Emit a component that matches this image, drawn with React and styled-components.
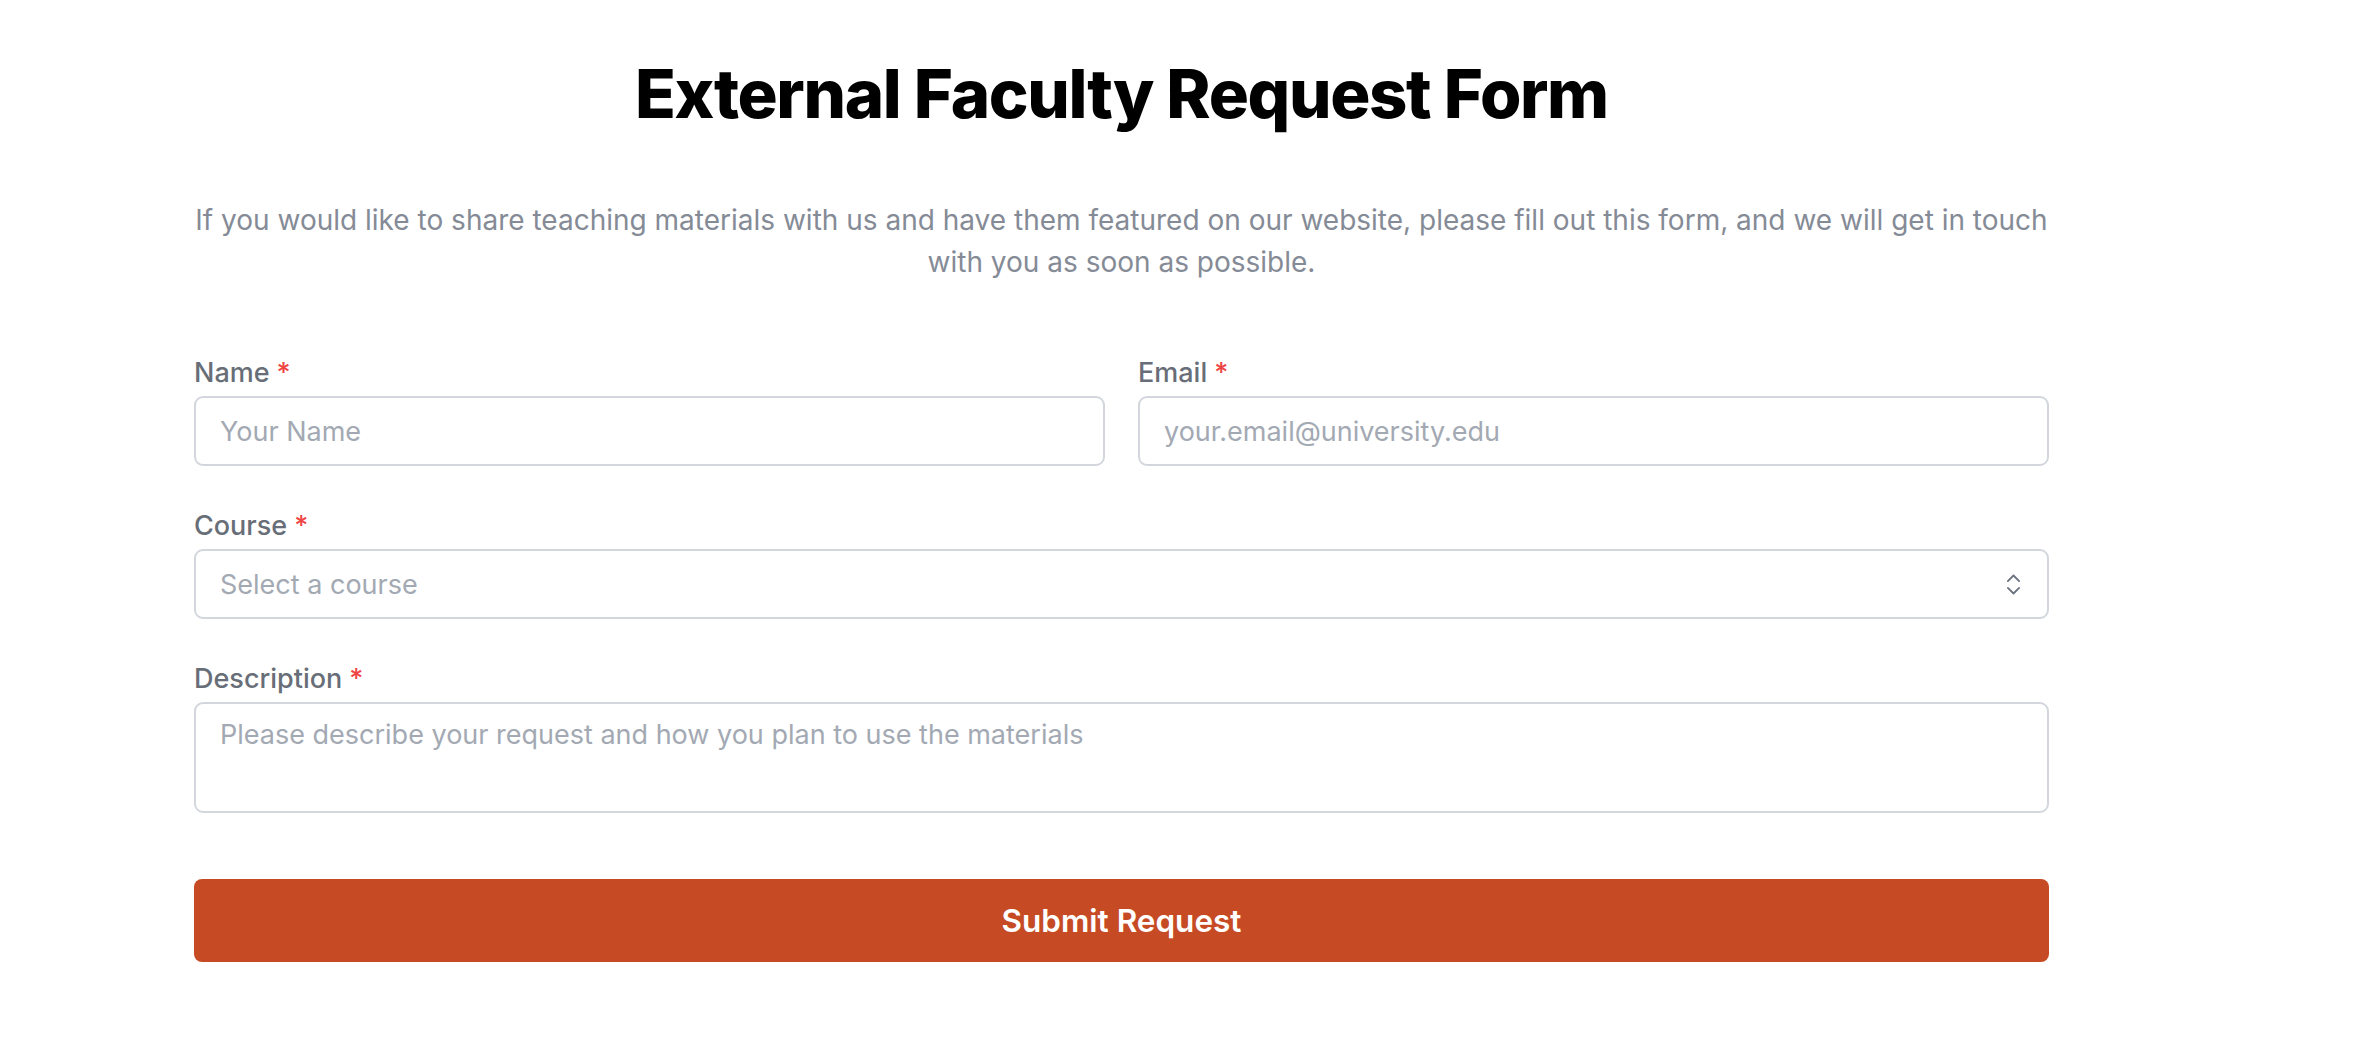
import React from "react";
import styled, { createGlobalStyle } from "styled-components";
import { ChevronsUpDown } from "lucide-react";

const GlobalStyle = createGlobalStyle`
  html, body {
    margin: 0;
    padding: 0;
    background: #ffffff;
  }
  body {
    font-family: Inter, "Noto Sans", "Liberation Sans", sans-serif;
    -webkit-font-smoothing: antialiased;
  }
  * { box-sizing: border-box; }
`;

const Page = styled.main`
  width: 1855px;
  margin-left: 194px;
  padding-top: 54px;
  padding-bottom: 80px;
`;

const Title = styled.h1`
  margin: 0;
  text-align: center;
  font-size: 67px;
  line-height: 80px;
  font-weight: 800;
  letter-spacing: -0.02em;
  color: #000000;
`;

const Intro = styled.p`
  margin: 65px -14px 70px;
  text-align: center;
  font-size: 28px;
  line-height: 42px;
  color: #858b96;
`;

const Form = styled.form`
  display: grid;
  grid-template-columns: 1fr 1fr;
  column-gap: 33px;
  row-gap: 40px;
`;

const Field = styled.div`
  display: flex;
  flex-direction: column;
  grid-column: ${(p) => (p.$wide ? "1 / -1" : "auto")};
`;

const Label = styled.label`
  font-size: 27px;
  line-height: 39px;
  font-weight: 500;
  color: #686e78;
  margin-bottom: 4px;
`;

const Required = styled.span`
  color: #ef4444;
  margin-left: 7px;
`;

const controlBase = `
  width: 100%;
  border: 2px solid #d3d7dd;
  border-radius: 9px;
  background: #ffffff;
  font-family: Inter, "Noto Sans", "Liberation Sans", sans-serif;
  font-size: 27px;
  color: #111827;
  outline: none;
  &::placeholder { color: #a3a9b3; }
`;

const Input = styled.input`
  ${controlBase}
  height: 70px;
  padding: 0 24px;
`;

const SelectBox = styled.div`
  ${controlBase}
  height: 70px;
  padding: 0 20px 0 24px;
  display: flex;
  align-items: center;
  justify-content: space-between;
  color: #a3a9b3;
  cursor: pointer;
`;

const SelectIcon = styled(ChevronsUpDown)`
  color: #6b7280;
  flex-shrink: 0;
`;

const TextArea = styled.textarea`
  ${controlBase}
  height: 111px;
  padding: 11px 24px;
  line-height: 39px;
  resize: none;
`;

const SubmitButton = styled.button`
  grid-column: 1 / -1;
  margin-top: 26px;
  height: 83px;
  border: none;
  border-radius: 8px;
  background: #c64b24;
  color: #ffffff;
  font-family: Inter, "Noto Sans", "Liberation Sans", sans-serif;
  font-size: 31.5px;
  font-weight: 600;
  cursor: pointer;
`;

export default function App() {
  return (
    <>
      <GlobalStyle />
      <Page>
        <Title>External Faculty Request Form</Title>
        <Intro>
          If you would like to share teaching materials with us and have them featured on our website, please fill out this form, and we will get in touch with you as soon as possible.
        </Intro>
        <Form onSubmit={(e) => e.preventDefault()}>
          <Field>
            <Label>
              Name<Required>*</Required>
            </Label>
            <Input placeholder="Your Name" />
          </Field>
          <Field>
            <Label>
              Email<Required>*</Required>
            </Label>
            <Input type="email" placeholder="your.email@university.edu" />
          </Field>
          <Field $wide>
            <Label>
              Course<Required>*</Required>
            </Label>
            <SelectBox>
              <span>Select a course</span>
              <SelectIcon size={27} strokeWidth={1.6} />
            </SelectBox>
          </Field>
          <Field $wide>
            <Label>
              Description<Required>*</Required>
            </Label>
            <TextArea placeholder="Please describe your request and how you plan to use the materials" />
          </Field>
          <SubmitButton type="submit">Submit Request</SubmitButton>
        </Form>
      </Page>
    </>
  );
}
